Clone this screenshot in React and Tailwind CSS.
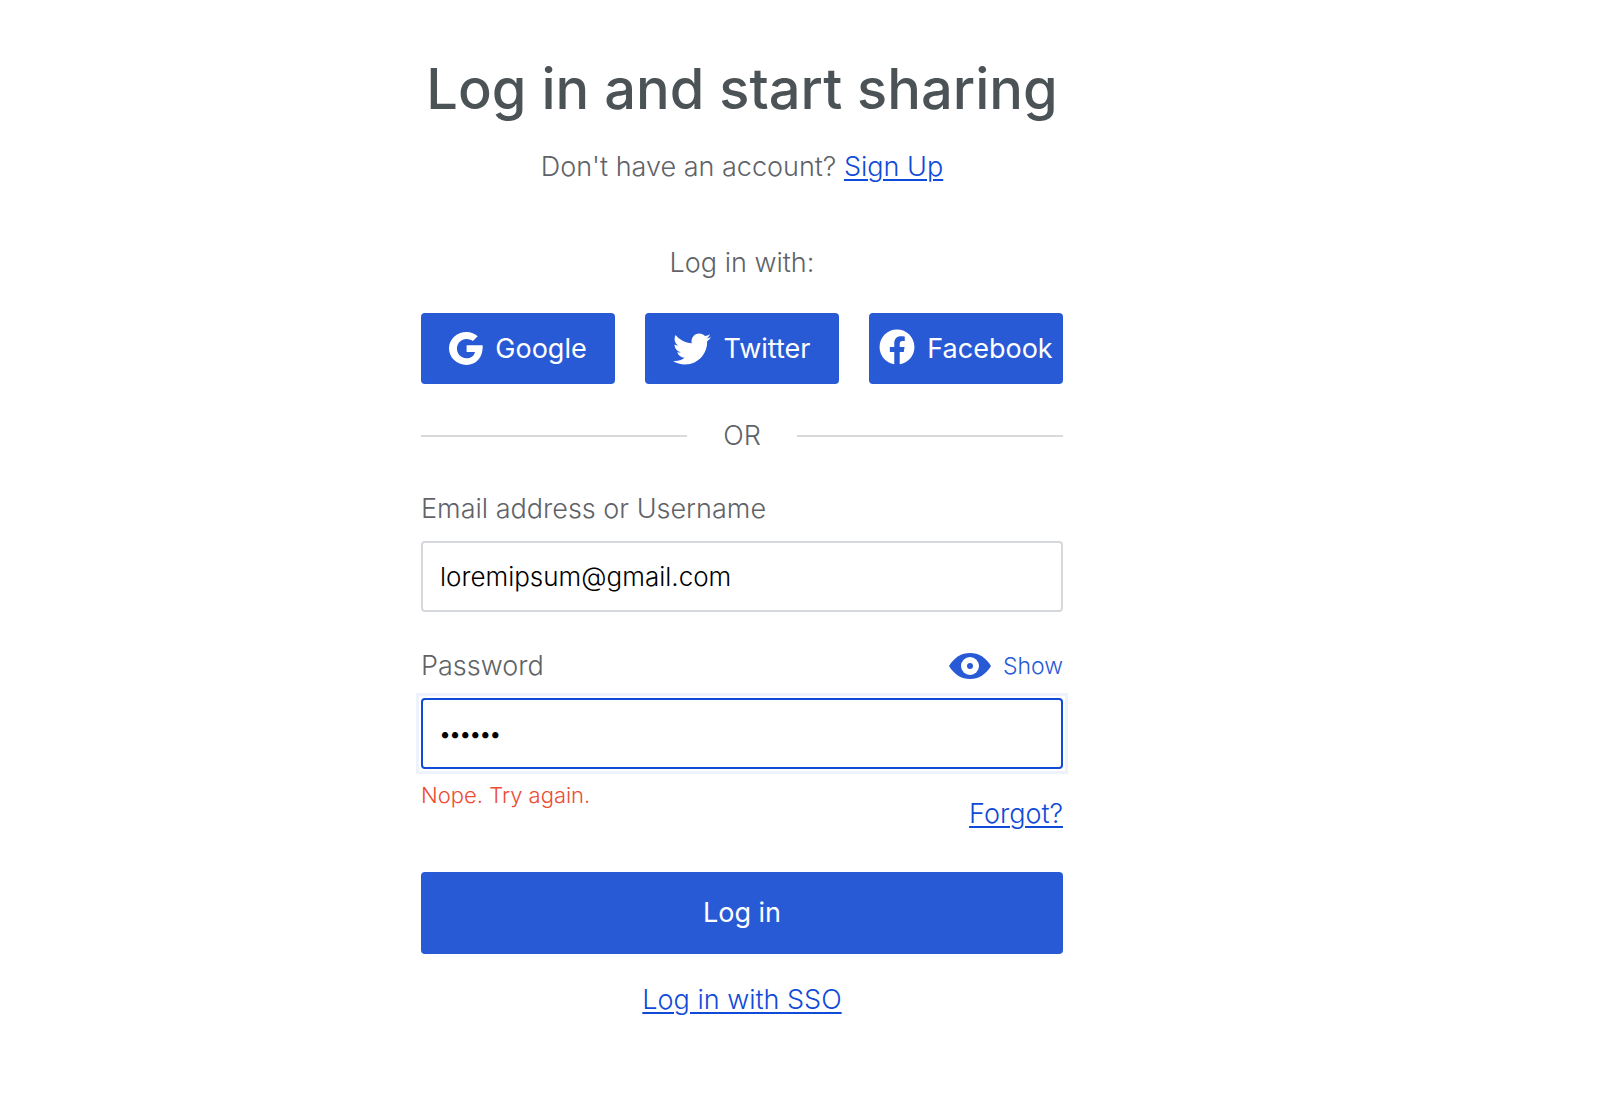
import { useState } from 'react';
import { FaFacebook, FaTwitter } from 'react-icons/fa';

const GoogleIcon = () => (
  <svg viewBox="0 0 34 33" className="h-[33px] w-[34px] shrink-0" fill="currentColor" aria-hidden="true">
    <path d="M17.6 13.2h16c.9 10.900-5.600 19.700-16.100 19.700C7.800 32.900 0 25.500 0 16.500S7.800.1 17.500.1c4.500 0 8.300 1.600 11.200 4.200l-4.800 4.800c-1.300-1.200-3.500-2.200-6.400-2.200-5.300 0-9.600 4.300-9.600 9.700s4.300 9.700 9.600 9.700c5.500 0 8-3.600 8.500-6.300h-8.400z" />
  </svg>
);

const EyeIcon = () => (
  <svg viewBox="0 0 42 26" className="h-[26px] w-[42px]" aria-hidden="true">
    <path d="M0 13C5 4.500 12.500 0 21 0s16 4.500 21 13c-5 8.500-12.500 13-21 13S5 21.500 0 13z" fill="currentColor" />
    <circle cx="21" cy="13" r="9" fill="#fff" />
    <circle cx="21" cy="13" r="3" fill="currentColor" />
  </svg>
);

const providers = [
  { name: 'Google', icon: <GoogleIcon /> },
  { name: 'Twitter', icon: <FaTwitter size={38} className="shrink-0" /> },
  { name: 'Facebook', icon: <FaFacebook size={36} className="-mt-1 shrink-0" /> }
];

export default function App() {
  const [form, setForm] = useState({ email: 'loremipsum@gmail.com', password: 'secret' });
  const [showPassword, setShowPassword] = useState(false);

  const handleChange = (event) => {
    const { name, value } = event.target;
    setForm((prev) => ({ ...prev, [name]: value }));
  };

  return (
    <div className="min-h-screen bg-white pt-[55px] pb-24 pr-[116px] font-['Inter',sans-serif] text-[27px] font-light leading-9 text-[#5f6368]">
      <main className="mx-auto w-full max-w-[642px]">
        <h1 className="whitespace-nowrap text-center text-[56px] font-medium leading-[68px] text-[#4b5357]">
          Log in and start sharing
        </h1>
        <p className="mt-[26px] text-center">
          Don't have an account?{' '}
          <a href="#signup" className="text-[#0f4bd8] underline decoration-2 underline-offset-3">
            Sign Up
          </a>
        </p>

        <p className="mt-[60px] text-center">Log in with:</p>
        <div className="mt-8 grid grid-cols-3 gap-[30px]">
          {providers.map((provider) => (
            <button
              key={provider.name}
              type="button"
              className="flex h-[71px] items-center justify-center gap-3 rounded bg-[#285ad6] font-normal text-white"
            >
              {provider.icon}
              {provider.name}
            </button>
          ))}
        </div>

        <div className="mt-[34px] flex items-center">
          <span className="h-0.5 flex-1 bg-[#d8d9da]" />
          <span className="w-[110px] text-center">OR</span>
          <span className="h-0.5 flex-1 bg-[#d8d9da]" />
        </div>

        <form onSubmit={(event) => event.preventDefault()} className="mt-[37px]">
          <label htmlFor="email" className="block">
            Email address or Username
          </label>
          <input
            id="email"
            name="email"
            value={form.email}
            onChange={handleChange}
            className="mt-[14px] block h-[71px] w-full rounded border-2 border-[#d5d8dc] px-[17px] text-[26px] text-black outline-none"
          />

          <div className="mt-9 flex items-center justify-between">
            <label htmlFor="password">Password</label>
            <button
              type="button"
              onClick={() => setShowPassword(!showPassword)}
              className="flex items-center gap-3 text-[23px] text-[#285ad6]"
            >
              <EyeIcon />
              {showPassword ? 'Hide' : 'Show'}
            </button>
          </div>
          <div className="mt-[14px] outline-3 outline-offset-2 outline-[#edf2fc]">
            <input
              id="password"
              name="password"
              type={showPassword ? 'text' : 'password'}
              value={form.password}
              onChange={handleChange}
              className="block h-[71px] w-full rounded border-2 border-[#0f4bd8] px-[17px] text-xl font-semibold text-black outline-none"
            />
          </div>

          <div className="flex justify-between">
            <p className="mt-2 text-[22px] text-[#ee4b33]">Nope. Try again.</p>
            <a href="#forgot" className="mt-[27px] text-[#0f4bd8] underline decoration-2 underline-offset-3">
              Forgot?
            </a>
          </div>

          <button type="submit" className="mt-10 h-[82px] w-full rounded bg-[#285ad6] font-normal text-white">
            Log in
          </button>
        </form>

        <p className="mt-7 text-center">
          <a href="#sso" className="text-[#0f4bd8] underline decoration-2 underline-offset-3">
            Log in with SSO
          </a>
        </p>
      </main>
    </div>
  );
}
